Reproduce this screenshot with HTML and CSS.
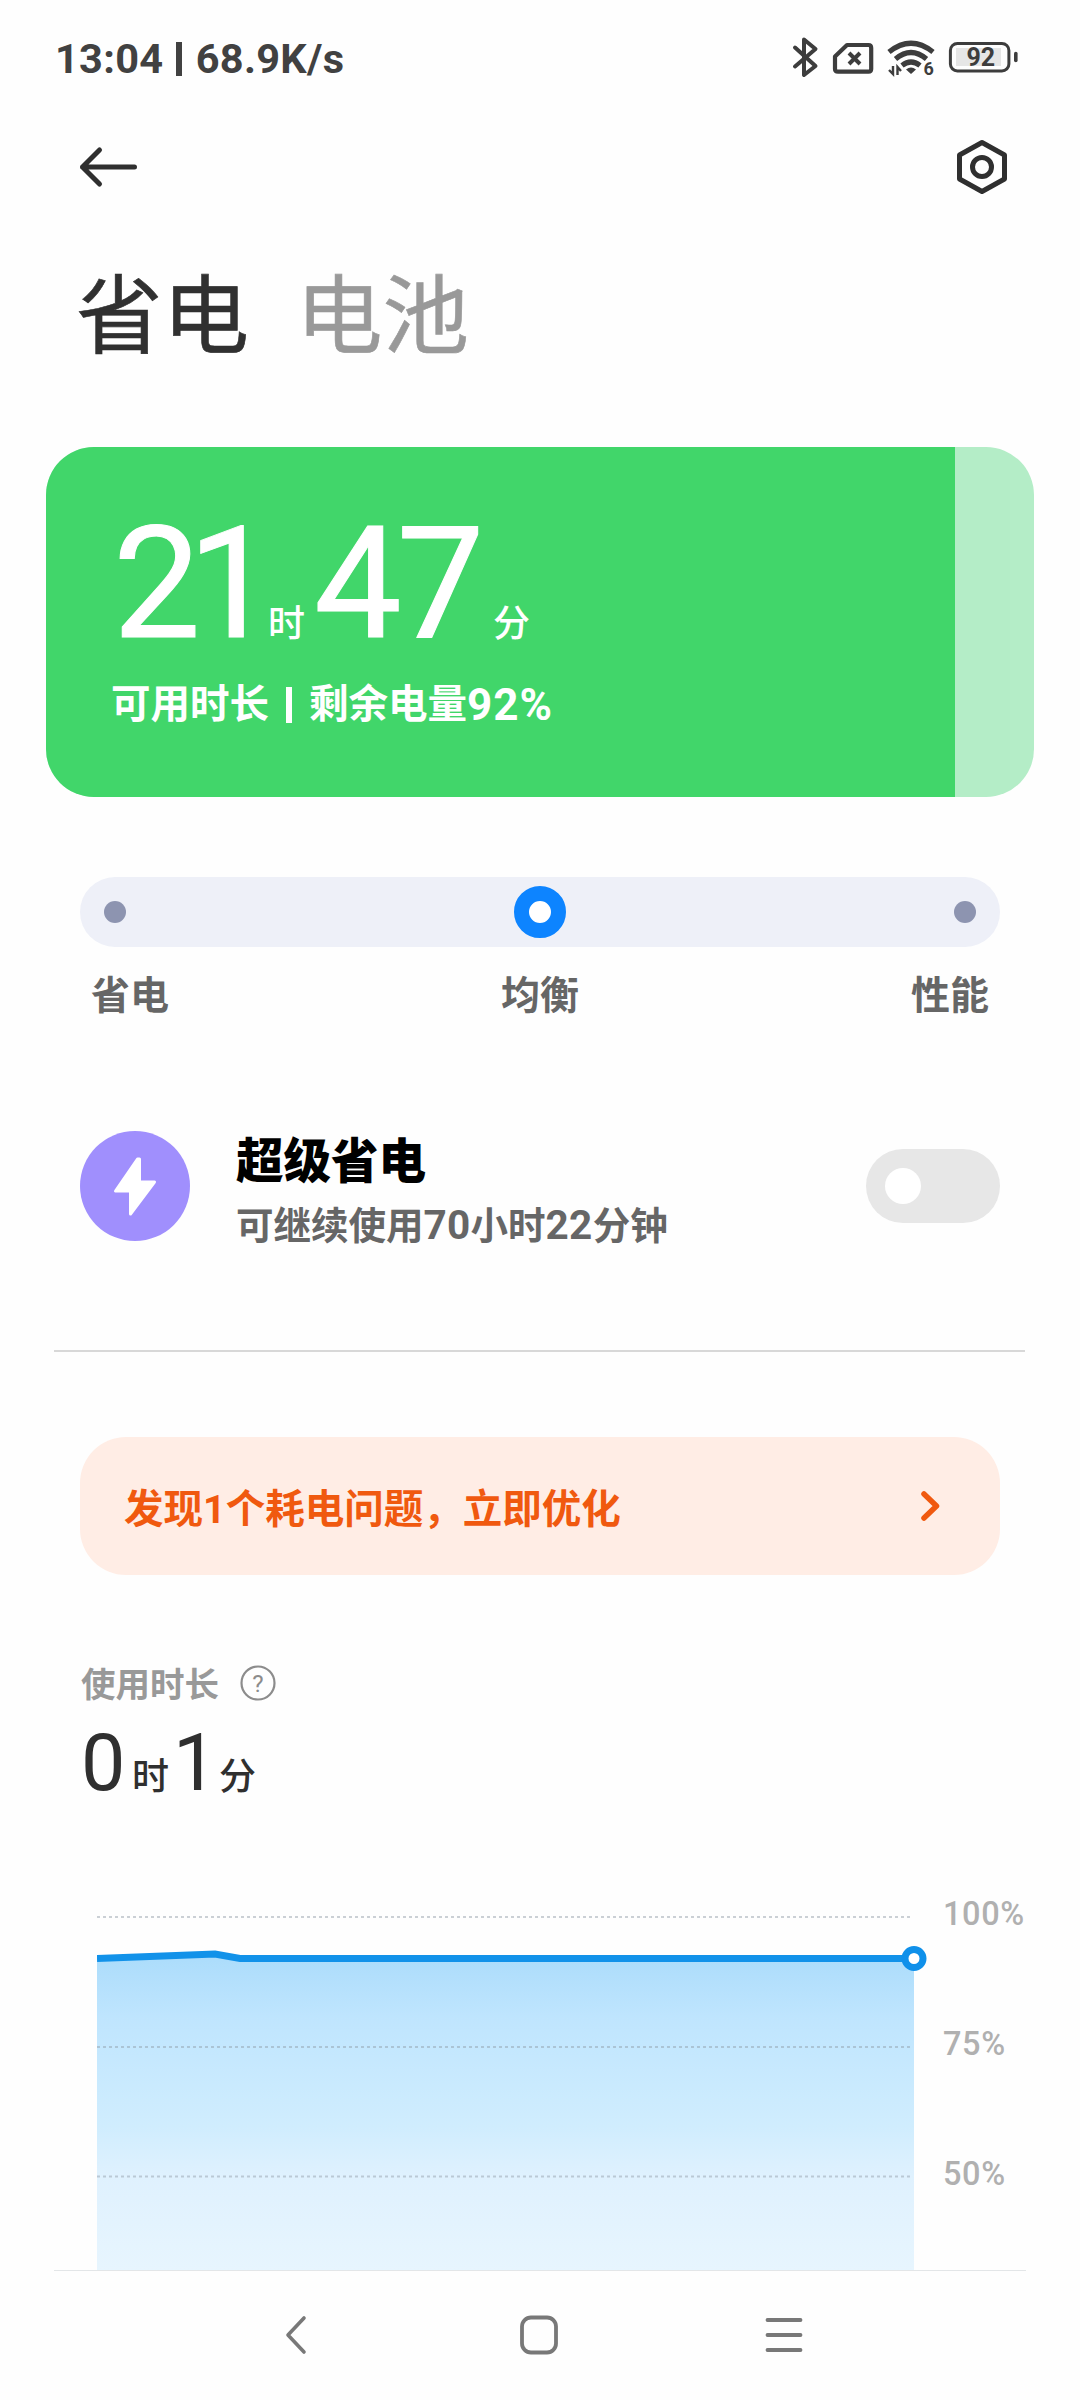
FILE: index.html
```html
<!DOCTYPE html>
<html lang="zh-CN">
<head>
<meta charset="utf-8">
<title>省电与电池</title>
<link rel="stylesheet" href="styles.css">
</head>
<body>
<div class="screen">
  <header class="status">
    <div class="status-text">13:04 <span class="bar"></span> 68.9K/s</div>
    <svg class="status-icons" width="230" height="50" viewBox="790 32 230 50" fill="none" stroke="#3d3d3d">
      <path d="M795 47.500L815.500 66L804 75V39.500L815.500 49L795 66.500" stroke-width="4" stroke-linejoin="round" stroke-linecap="round"/>
      <path d="M847 45H868.500Q871.200 45 871.200 48V69Q871.200 71.700 868.500 71.700H838Q835 71.700 835 69V56.500Z" stroke-width="4.200" stroke-linejoin="round"/>
      <path d="M849 53L860 64M860 53L849 64" stroke-width="4"/>
      <path d="M889 52Q911 34.500 933 52M895.500 59Q911 46 926.500 59M902 65.500Q911 58.500 920 65.500" stroke-width="5.200"/>
      <path d="M906 69.500Q911 65.500 916 69.500L911 74Z" fill="#3d3d3d" stroke="none"/>
      <path d="M893 66V74L889 70M897.500 75V67L901 71" stroke-width="2.400"/>
      <text class="wifi-gen" x="923.500" y="75">6</text>
      <rect x="956" y="48" width="45" height="18" fill="#e6e6e6" stroke="none"/>
      <rect x="950.400" y="43.400" width="58.500" height="27.500" rx="7" stroke-width="3"/>
      <path d="M1015.800 53.500V60.500" stroke-width="3.600" stroke-linecap="round"/>
      <text class="battery-level" x="966.500" y="66">92</text>
    </svg>
  </header>

  <div class="toolbar">
    <svg width="60" height="44" viewBox="0 0 60 44" fill="none" stroke="#2f2f2f" stroke-width="5" stroke-linecap="round" stroke-linejoin="round"><path d="M21.500 5L4.500 22L21.500 39M4.500 22H56.500"/></svg>
    <svg width="54" height="58" viewBox="0 0 54 58" fill="none" stroke="#2f2f2f" stroke-width="5" stroke-linejoin="round"><path d="M27 4.500L49.500 17V41L27 53.500L4.500 41V17Z"/><circle cx="27" cy="29" r="9.500"/></svg>
  </div>

  <nav class="tabs"><span class="tab on">省电</span><span class="tab">电池</span></nav>

  <section class="battery">
    <div class="charge">
      <div class="remaining"><span class="num hours">21</span><span class="unit">时</span><span class="num minutes">47</span><span class="unit last">分</span></div>
      <div class="summary">可用时长<i class="sep"></i>剩余电量<span class="pct">92%</span></div>
    </div>
  </section>

  <section class="mode">
    <div class="track"><i class="stop"></i><i class="stop active"></i><i class="stop"></i></div>
    <div class="mode-labels"><span>省电</span><span>均衡</span><span>性能</span></div>
  </section>

  <section class="ultra">
    <svg class="bolt" width="110" height="110" viewBox="0 0 110 110"><circle cx="55" cy="55" r="55" fill="#a08ffd"/><path d="M57.500 28L35.500 60H50.500V83L74.500 51H59.500V28Z" fill="#fff" stroke="#fff" stroke-width="3" stroke-linejoin="round"/></svg>
    <div class="ultra-text"><div class="ultra-title">超级省电</div><div class="ultra-sub">可继续使用<span class="n">70</span>小时<span class="n">22</span>分钟</div></div>
    <div class="switch"><i class="knob"></i></div>
  </section>

  <hr class="rule">

  <section class="notice">
    <span>发现1个耗电问题，立即优化</span>
    <svg width="24" height="36" viewBox="0 0 24 36" fill="none" stroke="#f0590f" stroke-width="5.500" stroke-linecap="round" stroke-linejoin="round"><path d="M5 7L17.500 19L5 31"/></svg>
  </section>

  <section class="usage">
    <div class="usage-head"><span>使用时长</span>
      <svg width="36" height="36" viewBox="0 0 36 36"><circle cx="18" cy="18" r="16.500" fill="none" stroke="#8c8c8c" stroke-width="2.200"/><text class="qmark" x="18" y="26.500">?</text></svg>
    </div>
    <div class="usage-time"><span class="num">0</span><span class="unit">时</span><span class="num one">1</span><span class="unit">分</span></div>
  </section>

  <section class="chart">
    <svg width="840" height="380" viewBox="97 1890 840 380" fill="none">
      <defs><linearGradient id="area" x1="0" y1="0" x2="0" y2="1"><stop offset="0" stop-color="#abdcfb"/><stop offset=".2" stop-color="#bfe5fe"/><stop offset=".55" stop-color="#d0edfe"/><stop offset=".7" stop-color="#dff1fe"/><stop offset="1" stop-color="#e7f5fe"/></linearGradient></defs>
      <path d="M97 1958.500L215 1954L240 1958.500H914V2270H97Z" fill="url(#area)"/>
      <path d="M97 1917H910M97 2047H912M97 2176.500H912" stroke="#8e9aa3" stroke-opacity=".45" stroke-width="2" stroke-dasharray="3 3"/>
      <path d="M97 1958.500L215 1954L240 1958.500H914" stroke="#1292e9" stroke-width="7"/>
      <circle cx="914" cy="1958.500" r="9" fill="#fff" stroke="#0f90ea" stroke-width="7"/>
    </svg>
    <div class="scale"><span>100%</span><span>75%</span><span>50%</span></div>
  </section>

  <footer class="navbar">
    <svg width="32" height="44" viewBox="0 0 32 44" fill="none" stroke="#787878" stroke-width="3.600" stroke-linecap="round" stroke-linejoin="round"><path d="M23 5L7 22L23 39"/></svg>
    <svg width="38" height="40" viewBox="0 0 38 40" fill="none" stroke="#787878" stroke-width="3.800"><rect x="2" y="2.500" width="34" height="35" rx="9"/></svg>
    <svg width="38" height="40" viewBox="0 0 38 40" fill="none" stroke="#787878" stroke-width="3.800" stroke-linecap="round"><path d="M2.500 5H35.500M2.500 20H35.500M2.500 35H35.500"/></svg>
  </footer>
</div>
</body>
</html>
```
FILE: styles.css
```css
* { box-sizing: border-box; }
body { margin: 0; background: #fefefe; font-family: Roboto, "Noto Sans CJK SC", sans-serif; color: #2f2f2f; }
svg { display: block; flex: none; }
.screen { width: 1080px; height: 2400px; overflow: hidden; display: flex; flex-direction: column; }
.screen > * { flex: none; }

.status { height: 110px; padding: 32px 60px 0 55px; display: flex; justify-content: space-between; }
.status-text { height: 50px; line-height: 53px; font-size: 41.500px; font-weight: 700; letter-spacing: .3px; color: #414141; white-space: nowrap; }
.bar { display: inline-block; width: 6px; height: 34px; background: #414141; vertical-align: -3px; margin: 0 3px 0 2px; }
.status-icons text { font-family: Roboto, sans-serif; font-weight: 700; fill: #3d3d3d; stroke: none; letter-spacing: 0; }
.wifi-gen { font-size: 18px; }
.battery-level { font-size: 25px; }

.toolbar { height: 114px; padding: 0 71px 0 78px; display: flex; align-items: center; justify-content: space-between; }

.tabs { height: 223px; padding: 28px 0 0 76px; display: flex; gap: 47px; font-size: 86.500px; line-height: 132px; font-weight: 400; }
.tab { color: #999; -webkit-text-stroke: .6px #999; }
.tab.on { color: #303030; -webkit-text-stroke-color: #303030; }

.battery { width: 988px; height: 350px; margin-left: 46px; border-radius: 48px; background: #b4edc7; overflow: hidden; }
.charge { width: 909px; height: 350px; background: #41d66a; color: #fff; padding: 63px 0 0 67px; }
.remaining { height: 147px; display: flex; align-items: baseline; line-height: 147px; }
.remaining .num { font-size: 156px; -webkit-text-stroke: 1px #fff; }
.remaining .hours { width: 155px; letter-spacing: -13px; }
.remaining .unit { font-size: 37px; width: 46px; font-weight: 500; }
.remaining .minutes { width: 179px; letter-spacing: -5px; }
.summary { height: 60px; margin: 18px 0 0 -2px; line-height: 60px; font-size: 39.500px; font-weight: 700; display: flex; align-items: center; }
.sep { width: 6px; height: 36px; background: #fff; margin: 0 17px; }
.pct { font-size: 44px; letter-spacing: 1px; }

.mode { height: 334px; padding: 80px 80px 0; }
.track { height: 70px; padding: 0 24px; border-radius: 35px; background: #eef0f8; display: flex; align-items: center; justify-content: space-between; }
.stop { width: 22px; height: 22px; border-radius: 50%; background: #8d94b0; }
.stop.active { width: 52px; height: 52px; background: #fff; border: 15px solid #0d84ff; }
.mode-labels { padding: 19px 11px 0; display: flex; justify-content: space-between; font-size: 39px; line-height: 60px; font-weight: 700; color: #666; }

.ultra { height: 110px; padding: 0 80px; display: flex; align-items: center; }
.ultra-text { margin-left: 46px; padding-top: 15px; flex: 1; }
.ultra-title { font-size: 47.500px; line-height: 64px; font-weight: 900; color: #000; }
.ultra-sub { font-size: 37.500px; line-height: 62px; font-weight: 700; color: #666; white-space: nowrap; }
.n { font-size: 40.500px; letter-spacing: .3px; }
.switch { width: 134px; height: 74px; border-radius: 37px; background: #e7e7e7; display: flex; align-items: center; padding-left: 19px; }
.knob { width: 36px; height: 36px; border-radius: 50%; background: #fff; }

.rule { width: 971px; height: 2px; border: 0; margin: 109px 0 0 54px; background: #d8d8d8; }

.notice { width: 920px; height: 138px; margin: 85px 0 0 80px; padding: 0 57px 2px 44px; border-radius: 46px; background: #ffede5; display: flex; align-items: center; justify-content: space-between; font-size: 39.500px; font-weight: 700; color: #f0590f; }

.usage { height: 315px; padding: 76px 0 0 81px; }
.usage-head { height: 62px; display: flex; align-items: center; gap: 21px; font-size: 34.500px; font-weight: 700; color: #999; }
.usage-head svg { margin-top: 2px; }
.qmark { font-size: 24px; fill: #8c8c8c; text-anchor: middle; font-weight: 400; }
.usage-time { height: 84px; margin-top: 8px; display: flex; align-items: baseline; line-height: 84px; }
.usage-time .num { font-size: 79px; width: 51px; }
.usage-time .unit { font-size: 37px; width: 41px; font-weight: 500; }
.usage-time .one { width: 46px; }

.chart { height: 381px; margin: 0 54px; padding-left: 43px; border-bottom: 1px solid #e3e6e8; display: flex; }
.scale { margin: -41px 0 0 6px; font-size: 32.500px; font-weight: 500; letter-spacing: .6px; color: #b0b0b0; line-height: 130px; display: flex; flex-direction: column; }

.navbar { height: 129px; padding: 0 277px 2px 281px; display: flex; align-items: center; justify-content: space-between; }
```
